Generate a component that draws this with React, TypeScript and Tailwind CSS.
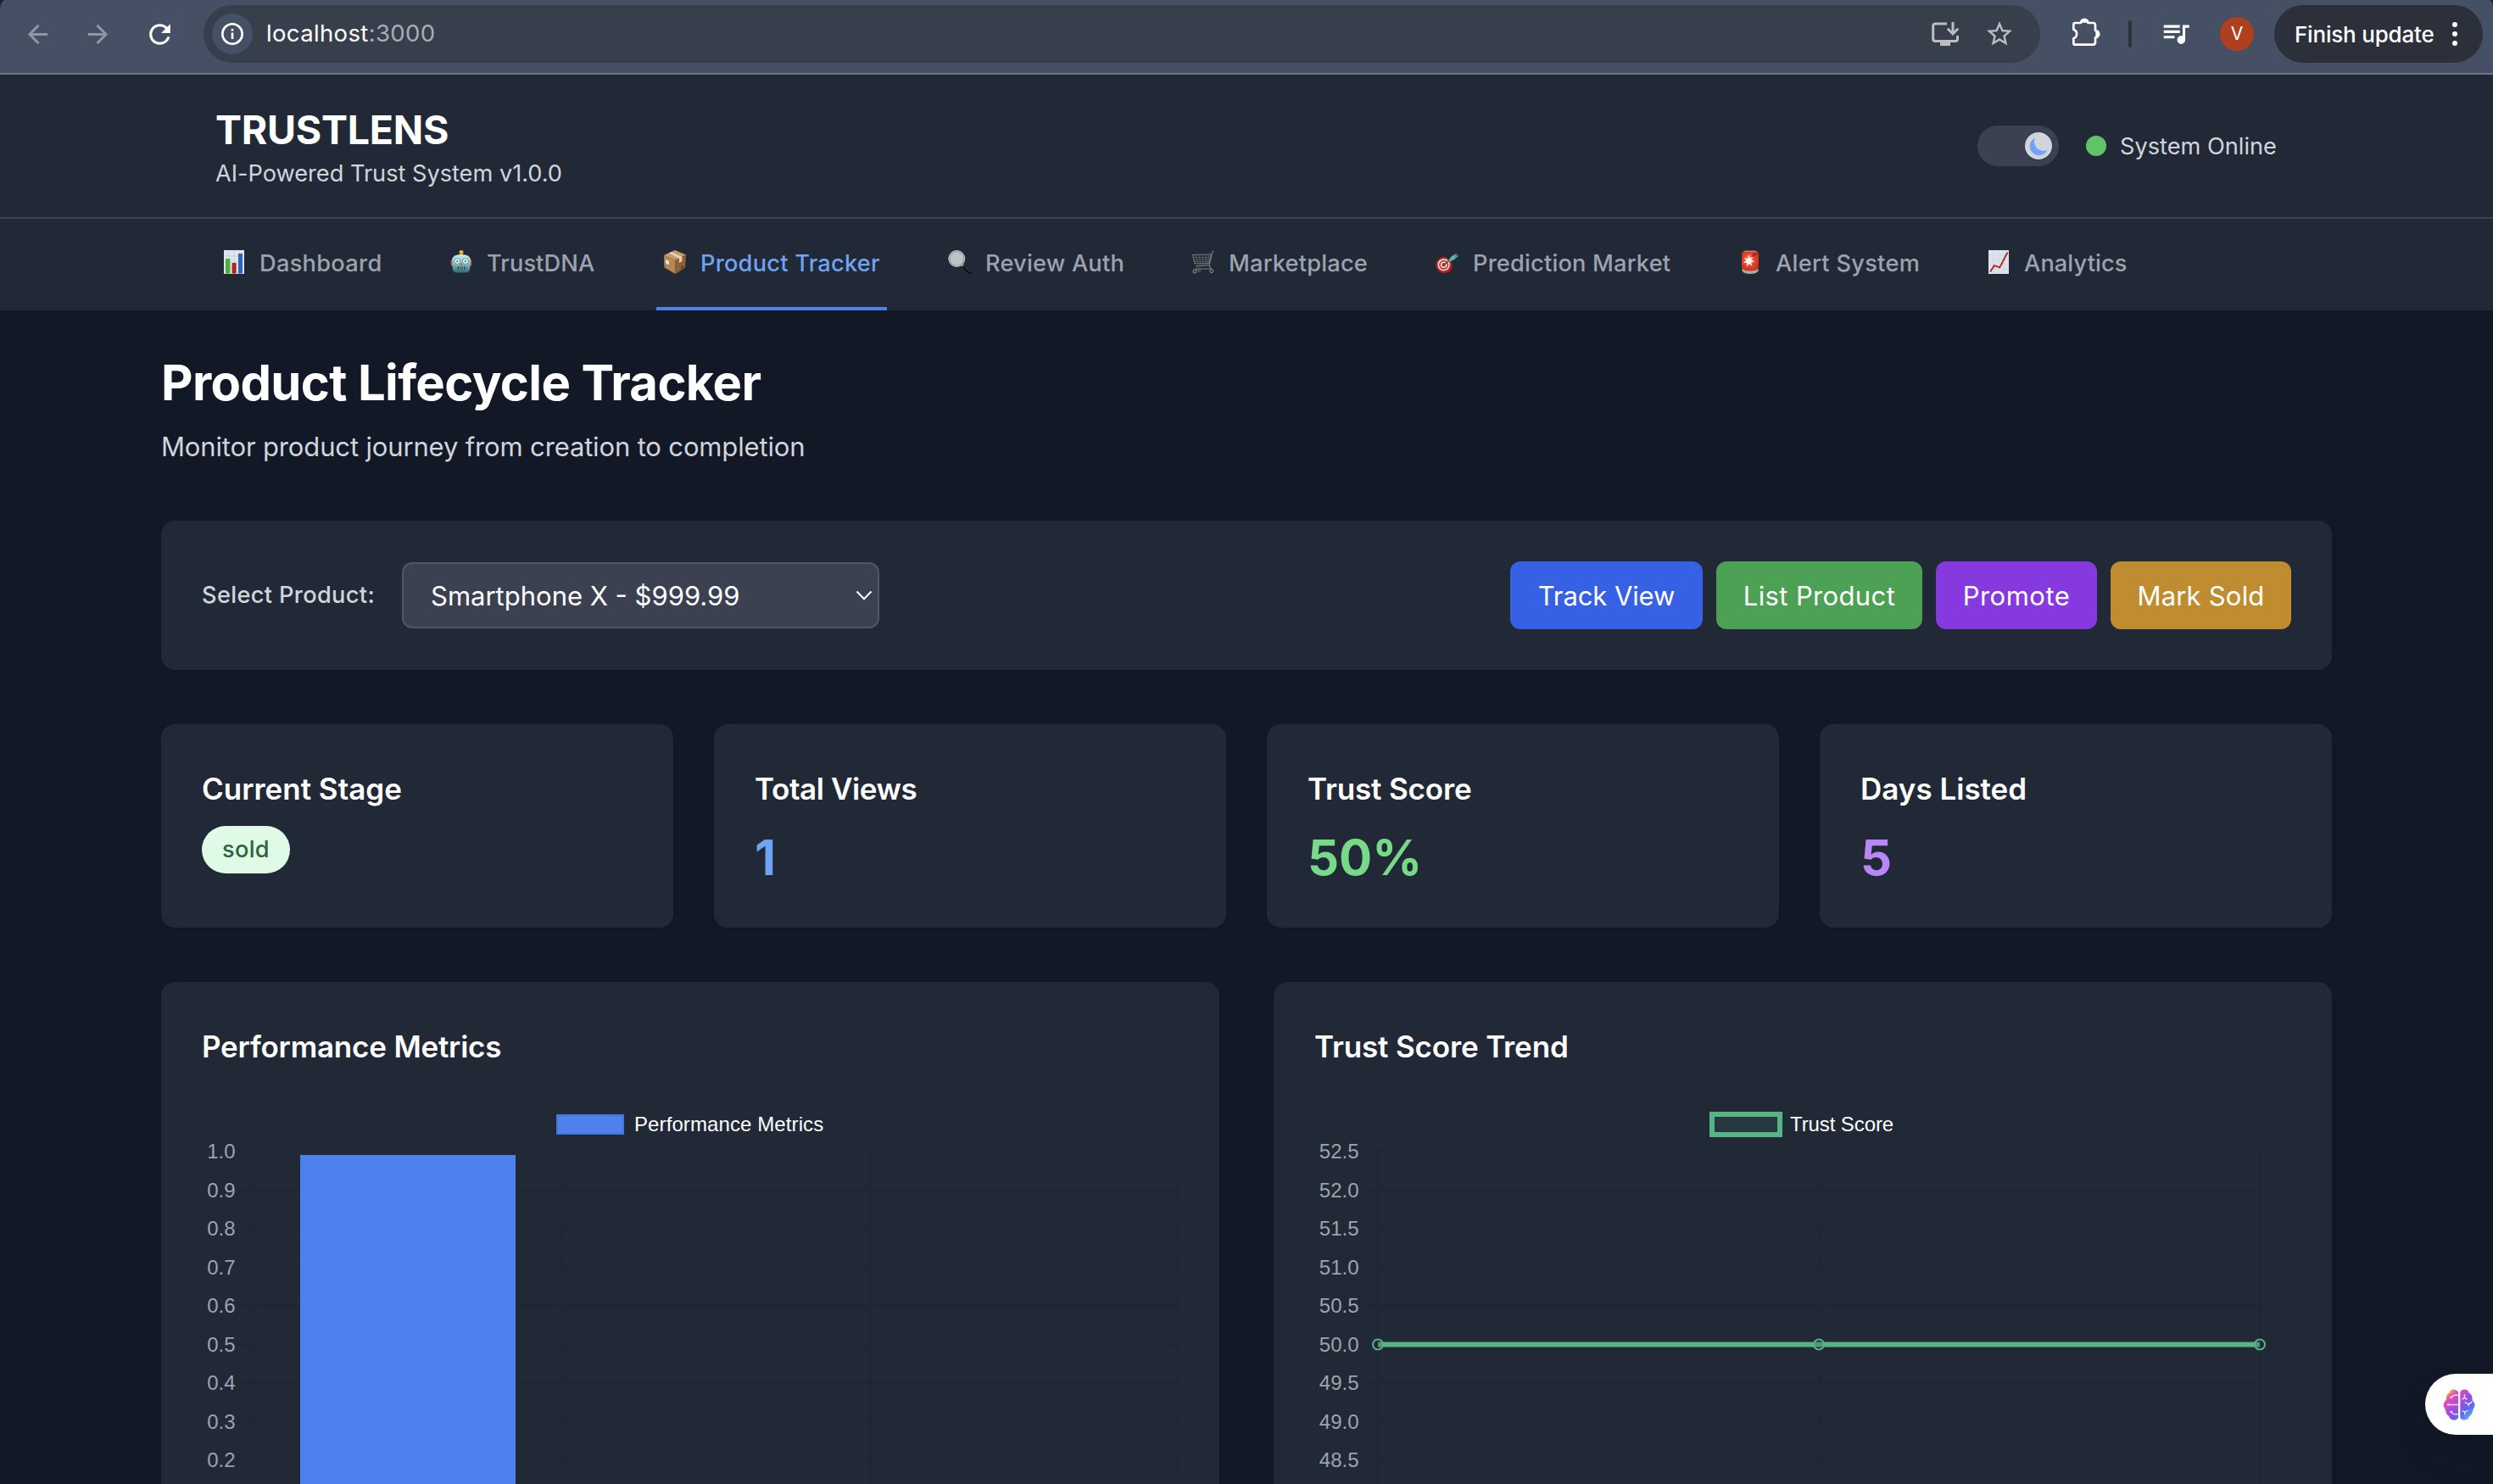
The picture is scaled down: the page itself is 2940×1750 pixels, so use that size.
import React from "react";
import { MdArrowBack, MdArrowForward, MdRefresh, MdStarBorder, MdQueueMusic } from "react-icons/md";

const emojiSvg = "block size-7 -mt-0.5 shrink-0";

function BarChartEmoji() {
  return (
    <svg viewBox="0 0 28 28" className={emojiSvg}>
      <rect x="2" y="0" width="24" height="28" fill="#dfe6f0" />
      <path d="M2 7h24M2 14h24M2 21h24M8 0v28M14 0v28M20 0v28" stroke="#bccbe0" strokeWidth="0.7" />
      <rect x="4" y="10" width="5.4" height="17.5" fill="#4fae35" />
      <rect x="11.6" y="15" width="5" height="12.5" fill="#ad241c" />
      <rect x="19" y="4" width="5" height="23.5" fill="#2f63bd" />
    </svg>
  );
}
function RobotEmoji() {
  return (
    <svg viewBox="0 0 28 28" className={emojiSvg}>
      <defs>
        <linearGradient id="robot" x1="0" y1="0" x2="0" y2="1">
          <stop offset="0" stopColor="#d6ebe9" />
          <stop offset="0.5" stopColor="#8dbec1" />
          <stop offset="1" stopColor="#2b6b77" />
        </linearGradient>
      </defs>
      <rect x="1.5" y="11" width="25" height="8" rx="2.5" fill="#c24b38" />
      <path d="M12 5h4l1 2h-6z" fill="#8a6a4a" />
      <path d="M3 11Q4 5 14 5t11 6l-.8 11Q23.700 26.500 19 26.500H9q-4.700 0-5.200-4.500z" fill="url(#robot)" />
      <circle cx="14" cy="2.600" r="2.500" fill="#f0b22e" />
      <circle cx="9.200" cy="13" r="3.400" fill="#e9ffff" stroke="#3e8f9b" strokeWidth="0.900" />
      <circle cx="18.800" cy="13" r="3.400" fill="#e9ffff" stroke="#3e8f9b" strokeWidth="0.900" />
      <circle cx="9.200" cy="13" r="1.500" fill="#50adc0" />
      <circle cx="18.800" cy="13" r="1.500" fill="#50adc0" />
      <path d="M14 14.500l1.500 3h-3z" fill="#d54a32" />
      <rect x="9.500" y="19.500" width="9" height="3" rx="0.800" fill="#1f3d45" />
      <path d="M11.700 19.500v3M14 19.500v3M16.300 19.500v3" stroke="#b6dadd" strokeWidth="0.800" />
    </svg>
  );
}
function PackageEmoji() {
  return (
    <svg viewBox="0 0 28 28" className={emojiSvg}>
      <path d="M1 6L14 0l13 5.500L14.500 12z" fill="#c79a68" />
      <path d="M1 6l13.500 6v16L1.500 20.500z" fill="#b88653" />
      <path d="M27 5.500L14.500 12v16L26 20.500z" fill="#8d6036" />
      <path d="M6.500 3.500L10 2l12.500 6-.3 5.300-3.400 1.700.2-5.300z" fill="#e2cfb4" />
      <path d="M3 11l4 2v4.500l-4-2z" fill="#e6e0d6" />
      <path d="M21 19.500l3-1.600v2.400L21 22z" fill="#5a3c20" />
    </svg>
  );
}
function MagnifierEmoji() {
  return (
    <svg viewBox="0 0 28 28" className={emojiSvg}>
      <path d="M16 16.500l4 4.200" stroke="#8d9296" strokeWidth="2.600" />
      <path d="M19.500 20l5.800 6" stroke="#101214" strokeWidth="4.200" strokeLinecap="round" />
      <path d="M20.500 19.800l5 5.200" stroke="#70777c" strokeWidth="0.900" strokeLinecap="round" />
      <circle cx="10.300" cy="10" r="9" fill="#bfc3c5" stroke="#8a9092" strokeWidth="2" />
      <circle cx="10.300" cy="10" r="9.300" fill="none" stroke="#d5dadb" strokeWidth="0.700" />
    </svg>
  );
}
function CartEmoji() {
  return (
    <svg viewBox="0 0 28 28" className={emojiSvg} fill="none">
      <path d="M26.500 1l-1.800 1.300-3.500 15.200-16 1.500" stroke="#6f7478" strokeWidth="1.300" />
      <path d="M1.500 5.500l22-.5-2.600 10.500L4 16z" stroke="#7d8285" strokeWidth="1" />
      <path d="M5.500 5.500L7 16M9.500 5.400l.9 10.500M13.500 5.300v10.500M17.500 5.200l-.8 10.500M21 5.100l-2 10.500M2 8.500h20.700M2.800 11h19.400M3.500 13.500h18" stroke="#676c70" strokeWidth="0.700" />
      <path d="M21 17.500l2 4.500H5.500L4 23.500" stroke="#7d8285" strokeWidth="1.200" />
      <circle cx="4" cy="25" r="2" fill="#2c2c2e" stroke="#a9948a" strokeWidth="1" />
      <circle cx="9" cy="24" r="1.400" fill="#2c2c2e" stroke="#8b7c75" strokeWidth="0.700" />
      <circle cx="23.800" cy="24.600" r="2" fill="#2c2c2e" stroke="#a9948a" strokeWidth="1" />
    </svg>
  );
}
function TargetEmoji() {
  return (
    <svg viewBox="0 0 28 28" className={emojiSvg}>
      <circle cx="10.800" cy="18.500" r="9" fill="#8e1b17" />
      <circle cx="9.600" cy="17.300" r="9" fill="#c22c26" />
      <circle cx="9.600" cy="17.300" r="7" fill="#f0e9e4" />
      <circle cx="9.600" cy="17.300" r="5.500" fill="#c22c26" />
      <circle cx="9.600" cy="17.300" r="3.800" fill="#f0e9e4" />
      <circle cx="9.600" cy="17.300" r="2.200" fill="#c22c26" />
      <path d="M9.800 17.300l9-7.500" stroke="#274a52" strokeWidth="1.400" />
      <path d="M15 13.500l3-5.500 5-3.500.8 1.800 3.200.4L22 11l-5 2.500z" fill="#5fb3b5" />
      <path d="M22.500 5L25.500 3.700 24.500 6.500l3 .3-4.500 3.200z" fill="#3d8e96" />
    </svg>
  );
}
function SirenEmoji() {
  return (
    <svg viewBox="0 0 28 28" className={emojiSvg}>
      <defs>
        <radialGradient id="siren" cx="0.450" cy="0.450" r="0.700">
          <stop offset="0" stopColor="#ff9a80" />
          <stop offset="0.400" stopColor="#e8492f" />
          <stop offset="1" stopColor="#b3271b" />
        </radialGradient>
      </defs>
      <path d="M4.500 22h19v2.500q-2 3.500-9.500 3.500t-9.500-3.500z" fill="#a9a8a3" />
      <path d="M4 5q0-4.500 5-4.500h10q5 0 5 4.500v16q-3 3.500-10 3.500T4 21z" fill="url(#siren)" />
      <path d="M7 .8h14v1H7z" fill="#b79a92" />
      <path d="M12.500 5l1.200 4.800 4-2-2.400 3.800 4.200 2-4.400.8 1.400 4.600-3.600-3-3 3.500.3-4.500-5-.2 4-2.200-2.500-3.800 4.300 1.500z" fill="#fff1ea" />
      <path d="M17.500 5h4M17.500 5v3" stroke="#8e1d14" strokeWidth="1.300" fill="none" />
    </svg>
  );
}
function TrendEmoji() {
  return (
    <svg viewBox="0 0 28 28" className={emojiSvg}>
      <rect x="2" y="0" width="24" height="28" fill="#dde3ea" />
      <path d="M2 5.600h24M2 11.200h24M2 16.800h24M2 22.400h24M8 0v28M14 0v28M20 0v28" stroke="#c9d2de" strokeWidth="0.600" />
      <path d="M4 25.500l4.800-7.300 6.500 2.200L24.600 2.500" fill="none" stroke="#b42822" strokeWidth="1.900" />
    </svg>
  );
}

const tabs = [
  { label: "Dashboard", Icon: BarChartEmoji, size: "w-[204px] tracking-[0.3px]" },
  { label: "TrustDNA", Icon: RobotEmoji, size: "w-[188px] tracking-[0.1px]" },
  { label: "Product Tracker", Icon: PackageEmoji, size: "w-[272px] tracking-[0.25px]", active: true },
  { label: "Review Auth", Icon: MagnifierEmoji, size: "w-[223px] tracking-[0.2px]" },
  { label: "Marketplace", Icon: CartEmoji, size: "w-[224px] tracking-[0.2px]" },
  { label: "Prediction Market", Icon: TargetEmoji, size: "w-[293px] tracking-[0.2px]" },
  { label: "Alert System", Icon: SirenEmoji, size: "w-[229px] tracking-[0.3px]" },
  { label: "Analytics", Icon: TrendEmoji, size: "w-[184px] tracking-[0.1px]" },
];

function InstallIcon() {
  return (
    <svg viewBox="0 0 32 28" className="h-7 w-8" fill="none" stroke="#bdbdbf" strokeWidth="3">
      <path d="M18 2H4.500Q1.700 2 1.700 4.500V20Q1.700 22.500 4.500 22.500H28Q30.500 22.500 30.500 20V16" />
      <path d="M10 24h12v4H10z" fill="#bdbdbf" stroke="none" />
      <path d="M25 0v13M18.800 7.800l6.200 6.200 6.200-6.200" />
    </svg>
  );
}
function PuzzleIcon() {
  return (
    <svg viewBox="576 30 108 108" className="size-9">
      <path d="M592 51H612A12 12 0 0 1 637 51H655Q663 51 663 59V78A12 12 0 0 1 663 103V120Q663 128 655 128H592Q586 128 586 122V106A17 17 0 0 0 586 74V57Q586 51 592 51Z" fill="none" stroke="#fff" strokeWidth="8" strokeLinejoin="round" />
      <path d="M613 50A12 12 0 0 1 636 50ZM664 79A12 12 0 0 1 664 102Z" fill="#fff" />
    </svg>
  );
}

function BrowserBar() {
  return (
    <div className="h-[88px] bg-[#1c212b]">
      <div className="flex h-full items-start rounded-tl-[6px_12px] rounded-tr-[5px_8px] border-b-2 border-[#6a7485] bg-[#465064]">
        <div className="flex h-20 w-[240px] items-center text-[#9097a3]">
          <MdArrowBack className="ml-[27px] size-[35px]" />
          <MdArrowForward className="ml-[36px] size-[35px]" />
          <MdRefresh className="ml-[37px] size-[37px] text-white" />
        </div>
        <div className="mt-1.5 flex h-[68px] w-[2166px] items-center rounded-full bg-[#383f4c] pl-2.5">
          <div className="flex size-12 items-center justify-center rounded-full bg-[#465064]">
            <svg viewBox="0 0 26 26" className="size-[26px]" fill="none" stroke="#fff">
              <circle cx="13" cy="13" r="11.700" strokeWidth="2.600" />
              <path d="M13 11.500v7.500M13 7v2.400" strokeWidth="2.600" />
            </svg>
          </div>
          <div className="ml-4 text-[27.5px] tracking-[0.35px] text-[#a9adb4]"><span className="text-white">localhost</span>:3000</div>
          <div className="ml-auto flex items-center pr-[30px] text-[#bdbdbf]">
            <InstallIcon />
            <MdStarBorder className="ml-[30px] size-9" />
          </div>
        </div>
        <div className="flex h-20 flex-1 items-center">
          <div className="mb-1 ml-[36px]"><PuzzleIcon /></div>
          <div className="ml-[32px] h-8 w-1 rounded-full bg-[#2b303b]" />
          <MdQueueMusic className="ml-[33px] size-[38px] -translate-y-px text-white" />
          <div className="ml-[33px] flex size-10 items-center justify-center rounded-full bg-[#ae4020] text-[21px] text-white">V</div>
          <div className="ml-6 flex h-[68px] w-[246px] items-center rounded-full bg-[#2b303b] pl-6">
            <span className="text-[26px] font-medium tracking-[-0.2px] whitespace-nowrap text-white">Finish update</span>
            <span className="ml-[22px] flex flex-col gap-[5px]">
              <i className="size-1.5 rounded-full bg-white" />
              <i className="size-1.5 rounded-full bg-white" />
              <i className="size-1.5 rounded-full bg-white" />
            </span>
          </div>
        </div>
      </div>
    </div>
  );
}

function Header() {
  return (
    <header className="flex h-[170px] items-center justify-between border-b-2 border-[#3a4150] bg-[#222936] px-[254px]">
      <div className="pt-0.5">
        <h1 className="text-[46.5px] leading-[64px] font-bold tracking-[-0.26px] text-white">TRUSTLENS</h1>
        <p className="text-[27.2px] leading-10 tracking-[-0.02px] text-[#d1d5db]">AI-Powered Trust System v1.0.0</p>
      </div>
      <div className="flex items-center">
        <div className="flex h-12 w-24 items-center justify-end rounded-full bg-[#3b4150] pr-2">
          <div className="flex size-8 items-center justify-center rounded-full bg-[#d1d5db] shadow">
            <svg viewBox="0 0 20 20" className="size-[27px]"><path d="M17.300 13.300A8 8 0 0 1 6.700 2.700a8 8 0 1 0 10.600 10.600z" fill="#6fa3f5" /></svg>
          </div>
        </div>
        <div className="ml-8 size-6 rounded-full bg-[#60c368]" />
        <div className="ml-4 w-[186px] pt-px text-[27.2px] leading-10 whitespace-nowrap text-[#d1d5db]">System Online</div>
      </div>
    </header>
  );
}

function Tabs() {
  return (
    <nav className="flex h-[108px] gap-16 bg-[#222936] pl-[254px]">
      {tabs.map(({ label, Icon, size, active }) => (
        <div
          key={label}
          className={`flex h-full shrink-0 items-center gap-4 border-b-4 px-2 text-[27.2px] leading-10 font-medium whitespace-nowrap ${size} ${active ? "border-[#4d82ee] text-[#6fa3f5]" : "border-transparent text-[#9ca3af]"}`}
        >
          <Icon />
          <span className="pt-0.5">{label}</span>
        </div>
      ))}
    </nav>
  );
}

const actions = [
  { label: "Track View", style: "w-[227px] bg-[#3761e4] tracking-[-0.1px]" },
  { label: "List Product", style: "w-[243px] bg-[#4ca154] tracking-[0.36px]" },
  { label: "Promote", style: "w-[190px] bg-[#8639df] tracking-[0.5px]" },
  { label: "Mark Sold", style: "w-[213px] bg-[#c08c30] tracking-[0.2px]" },
];

function ProductSelector() {
  return (
    <section className="flex h-[176px] items-center rounded-2xl bg-[#222936] px-12 shadow">
      <label className="w-[204px] pt-px text-[27.2px] font-medium tracking-[0.35px] whitespace-nowrap text-[#d1d5db]">Select Product:</label>
      <div className="ml-8 flex h-[78px] w-[563px] items-center justify-between rounded-xl border-2 border-[#4e5563] bg-[#3b4150] pr-[6px] pl-8 text-[31px] text-white">
        <span className="pt-0.5">Smartphone X - $999.99</span>
        <svg viewBox="0 0 20 12" className="h-3 w-5" fill="none" stroke="#fff" strokeWidth="2"><path d="M1.500 1.500L10 10.300 18.500 1.500" /></svg>
      </div>
      <div className="ml-auto flex gap-4">
        {actions.map((a) => (
          <button key={a.label} className={`h-20 rounded-xl pt-0.5 text-[31px] text-white ${a.style}`}>{a.label}</button>
        ))}
      </div>
    </section>
  );
}

const cardTitle = "text-[35px] leading-[56px] font-semibold text-white";

function StatCard({ title, spacing, children }: { title: string; spacing: string; children: React.ReactNode }) {
  return (
    <div className="h-60 rounded-2xl bg-[#222936] p-12 shadow">
      <h3 className={`mb-4 ${cardTitle} ${spacing}`}>{title}</h3>
      {children}
    </div>
  );
}

const rows = [0, 1, 2, 3, 4, 5, 6, 7, 8, 9];
const rowY = (i: number) => Math.round(1358 + i * 45.5);
const chartBox = "block h-[600px] w-[1152px] font-['Liberation_Sans',sans-serif] text-[24px]";

function Grid({ from, to, columns, labels, labelEnd }: { from: number; to: number; columns: number[]; labels: string[]; labelEnd: number }) {
  return (
    <g>
      {rows.map((i) => (
        <rect key={i} x={from} y={rowY(i) - 1} width={to - from} height="2" fill="#1f2531" />
      ))}
      {columns.map((x) => (
        <rect key={x} x={x - 1} y="1358" width="2" height="520" fill="#1f2531" />
      ))}
      {labels.map((t, i) => (
        <text key={t} x={labelEnd} y={rowY(i) + 7.500} textAnchor="end" fill="#9ca3af">{t}</text>
      ))}
    </g>
  );
}

function MetricsChart() {
  return (
    <svg viewBox="238 1294 1152 600" className={chartBox}>
      <Grid from={283} to={1390} columns={[299, 663, 1026, 1389]} labels={["1.0", "0.9", "0.8", "0.7", "0.6", "0.5", "0.4", "0.3", "0.2"]} labelEnd={277.500} />
      <rect x="354" y="1362" width="254" height="520" fill="#4d82ee" />
      <rect x="657" y="1315" width="78" height="22" fill="#4d82ee" stroke="#4576d6" strokeWidth="2" />
      <text x="748" y="1334" fill="#fff" letterSpacing="0.1">Performance Metrics</text>
    </svg>
  );
}

function TrendChart() {
  return (
    <svg viewBox="1550 1294 1152 600" className={chartBox}>
      <Grid from={1610} to={2666} columns={[1625, 2145, 2665]} labels={["52.5", "52.0", "51.5", "51.0", "50.5", "50.0", "49.5", "49.0", "48.5"]} labelEnd={1602.500} />
      <rect x="2019" y="1314" width="80" height="24" fill="#28383f" stroke="#57b486" strokeWidth="6" />
      <text x="2111" y="1334" fill="#fff" letterSpacing="-0.1">Trust Score</text>
      <path d="M1625 1585.500H2665" stroke="#57b486" strokeWidth="6" />
      {[1625, 2145, 2665].map((x) => (
        <circle key={x} cx={x} cy="1585.500" r="6" fill="#28383f" fillOpacity="0.2" stroke="#57b486" strokeWidth="2" />
      ))}
    </svg>
  );
}

function BrainIcon() {
  return (
    <svg viewBox="0 0 38 41" className="h-[37px] w-[38px]" preserveAspectRatio="none">
      <defs>
        <linearGradient id="brain" gradientUnits="userSpaceOnUse" x1="3" y1="5" x2="36" y2="37">
          <stop offset="0.020" stopColor="#efab3c" />
          <stop offset="0.200" stopColor="#e04bbd" />
          <stop offset="0.500" stopColor="#9a4fe0" />
          <stop offset="0.720" stopColor="#5b64ee" />
          <stop offset="1" stopColor="#58c6ff" />
        </linearGradient>
      </defs>
      <path d="M18 4.500Q17 .5 12.500.5 8.500.5 7.500 5 3.500 7 4 12.500 3.500 15 1.800 17-.8 21 2.200 25.500 3 26.500 3.200 29 4 33.500 7 35.500 8.500 40.500 12.500 40.500 17 40.500 18 37z" fill="url(#brain)" />
      <path d="M20.300 4.500Q21.300.5 25.500.5 29.500.5 30.800 5 35 8 34.500 13 34.500 15 36.200 17 39 21 36 26 35 27.500 35 29.500 34.500 33 31 36 29.500 40.500 25.500 40.500 21.300 40.500 20.300 37z" fill="url(#brain)" />
      <g fill="none" stroke="#f3d9fb" strokeWidth="1.500">
        <path d="M18 8h-3.500Q11.500 8 10.200 10.500M6.500 20.500H18M18 33h-3.500Q11.500 33 10.200 30.500" />
        <path d="M25.500 7v4.500M22.500 13.500l3-2 3 2.200M25.500 17.500l4.200 1.800q3.500 0 4.500-3.200M30.300 19.500v3M22.500 28.500l3.300 1.500 4-2M25.800 30v3.500" />
      </g>
      <circle cx="9.800" cy="11" r="1.400" fill="#f3d9fb" />
      <circle cx="6.300" cy="20.500" r="1.400" fill="#f3d9fb" />
      <circle cx="9.800" cy="30" r="1.400" fill="#f3d9fb" />
    </svg>
  );
}

export default function App() {
  const numberStyle = "pt-px text-[58px] leading-[72px] font-bold";
  return (
    <div className="relative h-[1750px] w-[2940px] overflow-hidden bg-[#121826] font-['Inter',sans-serif]">
      <BrowserBar />
      <Header />
      <Tabs />
      <main className="px-[190px] pt-[49px]">
        <h2 className="text-[58px] leading-[72px] font-bold tracking-[-0.65px] text-white">Product Lifecycle Tracker</h2>
        <p className="mt-4 text-[31px] leading-[48px] tracking-[-0.15px] text-[#d1d5db]">Monitor product journey from creation to completion</p>
        <div className="mt-[63px]"><ProductSelector /></div>
        <section className="mt-16 grid grid-cols-4 gap-12">
          <StatCard title="Current Stage" spacing="">
            <span className="flex h-14 w-[104px] items-center justify-center rounded-full bg-[#e0fae8] pt-px text-[27.2px] font-medium tracking-[0.3px] text-[#306438]">sold</span>
          </StatCard>
          <StatCard title="Total Views" spacing="tracking-[-0.4px]">
            <p className={`${numberStyle} text-[#6fa3f5]`}>1</p>
          </StatCard>
          <StatCard title="Trust Score" spacing="tracking-[-0.15px]">
            <p className={`${numberStyle} text-[#78da88]`}>50%</p>
          </StatCard>
          <StatCard title="Days Listed" spacing="">
            <p className={`${numberStyle} text-[#b887f7]`}>5</p>
          </StatCard>
        </section>
        <section className="mt-16 grid grid-cols-2 gap-16">
          <div className="rounded-2xl bg-[#222936] p-12 shadow">
            <h3 className={`mb-8 tracking-[-0.2px] ${cardTitle}`}>Performance Metrics</h3>
            <MetricsChart />
          </div>
          <div className="rounded-2xl bg-[#222936] p-12 shadow">
            <h3 className={`mb-8 tracking-[-0.15px] ${cardTitle}`}>Trust Score Trend</h3>
            <TrendChart />
          </div>
        </section>
      </main>
      <div className="absolute top-[1620px] right-0 flex h-[72px] w-20 items-center rounded-l-full bg-white pl-[21px] shadow-2xl">
        <BrainIcon />
      </div>
    </div>
  );
}
